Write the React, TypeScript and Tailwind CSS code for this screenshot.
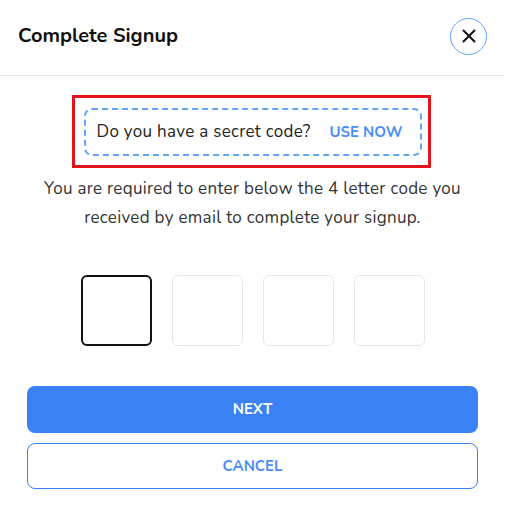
import React from "react";

export default function App() {
  return (
    <div
      className="w-[505px] bg-white text-[#222]"
      style={{ fontFamily: '"Nunito", "Noto Sans", sans-serif' }}
    >
      <div className="flex h-[76px] items-center justify-between border-b border-[#e5e7eb] pb-[3px] pl-[18px] pr-[18px]">
        <h2 className="text-[20px] font-bold text-[#111]">Complete Signup</h2>
        <button className="flex h-[37px] w-[37px] items-center justify-center rounded-full border border-[#60a5fa] bg-white">
          <svg width="16" height="16" viewBox="0 0 16 16" fill="none">
            <path d="M2.5 2.5L13.5 13.5M13.5 2.5L2.5 13.5" stroke="#111" strokeWidth="2" strokeLinecap="round" />
          </svg>
        </button>
      </div>

      <div className="flex flex-col items-center">
        <div className="mt-[19px] ml-[-3px] border-[3px] border-[#e3121b] pt-[10px] pr-[6px] pb-[9px] pl-[9px]">
          <div className="flex h-[48px] w-[338px] items-center rounded-[8px] border-2 border-dashed border-[#60a5fa] pl-[11px] pr-[17px]">
            <span className="text-[17px] tracking-[0.3px] text-[#222]">Do you have a secret code?</span>
            <button className="ml-auto text-[15px] font-bold text-[#4a8ef5]">USE NOW</button>
          </div>
        </div>

        <p className="mt-[6px] text-center text-[17px] leading-[29px] tracking-[0.3px] text-[#333]">
          You are required to enter below the 4 letter code you
          <br />
          received by email to complete your signup.
        </p>

        <div className="mt-[43px] flex gap-[20px]">
          <div className="h-[71px] w-[71px] rounded-[6px] border-2 border-[#111]" />
          <div className="h-[71px] w-[71px] rounded-[6px] border border-[#e5e7eb]" />
          <div className="h-[71px] w-[71px] rounded-[6px] border border-[#e5e7eb]" />
          <div className="h-[71px] w-[71px] rounded-[6px] border border-[#e5e7eb]" />
        </div>

        <div className="mt-[40px] flex w-full flex-col gap-[10px] px-[27px] pb-[28px]">
          <button className="h-[47px] w-full rounded-[8px] bg-[#3b82f6] text-[15px] font-bold text-white">
            NEXT
          </button>
          <button className="h-[46px] w-full rounded-[8px] border border-[#3b82f6] bg-white text-[15px] font-bold text-[#4a8ef5]">
            CANCEL
          </button>
        </div>
      </div>
    </div>
  );
}
